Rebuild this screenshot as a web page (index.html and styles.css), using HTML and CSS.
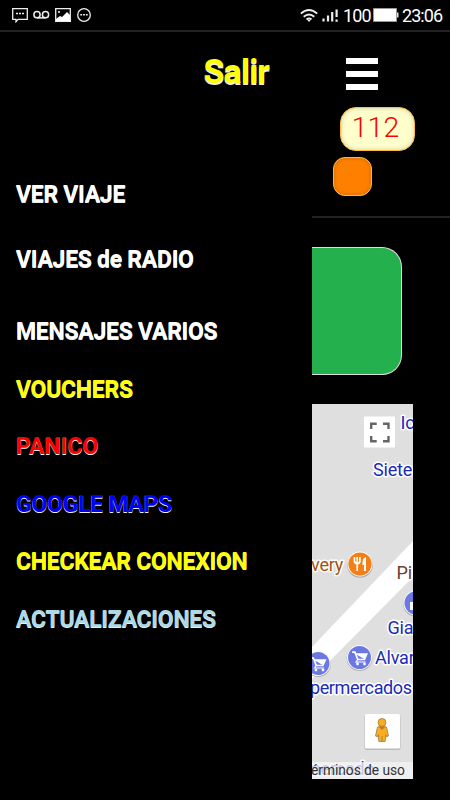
FILE: index.html
```html
<!DOCTYPE html>
<html lang="es">
<head>
<meta charset="utf-8">
<title>Menú</title>
<link rel="stylesheet" href="styles.css">
</head>
<body>
<header class="status">
  <svg class="notices" width="84" height="18" viewBox="0 0 84 18" fill="none" stroke="#eee" stroke-width="1.3">
    <path d="M.7 3.7h14.6v10.6H6l-2 2.4v-2.4H.7z"/><path d="M4 8.5h2m1 0h2m1 0h2" stroke-width="1.6"/>
    <circle cx="25" cy="9.7" r="3.1" stroke-width="1.5"/><circle cx="33.5" cy="9.7" r="3.1" stroke-width="1.5"/><path d="M25 12.9h8.5" stroke-width="1.5"/>
    <path d="M43.7 3.7h14.6v12.6H43.7z"/><path d="M44 14l4-3 2 1 5-5 3 3v6H44z" fill="#fff" stroke="none"/><circle cx="47" cy="7" r="1" fill="#fff" stroke="none"/>
    <circle cx="72" cy="10" r="6.3"/><path d="M68.3 9.8h1.8m1 0h1.8m1 0h1.8" stroke-width="1.6"/>
  </svg>
  <div class="system">
    <svg width="38" height="18" viewBox="0 0 38 18" fill="none" stroke="#eee" stroke-width="1.9">
      <path d="M.8 7.6Q9 .2 17.200 7.600M3.700 10.700q5.300-4.600 10.600 0M6.500 13.600q2.500-2 5 0"/><path d="M7.500 14h3L9 16z" fill="#fff" stroke="none"/>
      <path d="M23.500 15.500v-3M28 15.500v-6M32.200 15.500V6M36.600 3.500v7.500M36.600 13.500v2.300" stroke-width="2.200"/>
    </svg>
    <span class="percent">100</span>
    <svg width="26" height="14" viewBox="0 0 26 14"><path d="M.5.500h23v13H.500z" fill="#fff" stroke="#999"/><path d="M24 4.500h1.500v5H24z" fill="#ddd"/></svg>
    <span class="clock">23:06</span>
  </div>
</header>
<div class="app">
  <nav class="menu">
    <a class="exit">Salir</a>
    <a class="item first">VER VIAJE</a>
    <a class="item second">VIAJES de RADIO</a>
    <a class="item third">MENSAJES VARIOS</a>
    <a class="item yellow">VOUCHERS</a>
    <a class="item red">PANICO</a>
    <a class="item blue">GOOGLE MAPS</a>
    <a class="item yellow">CHECKEAR CONEXION</a>
    <a class="item pale">ACTUALIZACIONES</a>
  </nav>
  <main class="page">
    <div class="top">
      <div class="burger"><i></i><i></i><i></i></div>
      <div class="number">112</div>
      <div class="light"></div>
    </div>
    <div class="green"></div>
    <svg class="map" width="101" height="375" viewBox="0 0 101 375">
      <defs>
        <g id="cart"><circle r="12.800" cy=".7" fill="#aaa"/><circle r="12.500" fill="#fff"/><circle r="11.500" fill="#6b78e2"/><path d="M-7.500-5.500h3l3 7.500h7M-4-3.500h11.500L5 2h-7z" fill="#fff" stroke="#fff" stroke-width="1.300"/><path d="M-2 2.500l-1.500 2H6" stroke="#fff" stroke-width="1.200" fill="none"/><circle cx="-2" cy="6.500" r="1.400" fill="#fff"/><circle cx="5" cy="6.500" r="1.400" fill="#fff"/></g>
      </defs>
      <path d="M0 0h101v375H0z" fill="#dfdfdf"/>
      <path d="M0 243L101 137v36L0 275z" fill="#fff"/>
      <rect x="52" y="12.500" width="31" height="31" rx="1" fill="#fff"/>
      <path d="M59.200 25v-5.300h5.500M71 19.700h5.500V25M76.500 32v5.300H71M64.700 37.300h-5.500V32" fill="none" stroke="#666" stroke-width="2.400"/>
      <g class="place">
        <text x="88.500" y="25">Ic</text>
        <text x="61" y="71.500">Siete</text>
        <text class="food" x="-1" y="166.500">very</text>
        <text class="food dark" x="84.500" y="174.500">Pi</text>
        <text x="75.500" y="230">Gia</text>
        <text x="63" y="259.500">Alvar</text>
        <text class="long" x="-2" y="290">permercados</text>
      </g>
      <circle cx="48" cy="161" r="12.800" fill="#aaa"/><circle cx="48" cy="160" r="12.500" fill="#fff"/><circle cx="48" cy="160" r="11.600" fill="#f57f17"/>
      <path d="M42.500 153v4q0 2.500 2.700 2.500t2.700-2.500v-4M45.200 153v14" fill="none" stroke="#fff" stroke-width="1.700"/><path d="M54 153q-4 1-3.500 8h1.500v6h2z" fill="#fff"/>
      <circle cx="104" cy="200" r="12.800" fill="#aaa"/><circle cx="104" cy="199" r="12.500" fill="#fff"/><circle cx="104" cy="199" r="11.500" fill="#6b78e2"/><path d="M98 198h4v8h-4z" fill="#fff"/>
      <use href="#cart" x="47.500" y="253.500"/><use href="#cart" x="6" y="259.500"/>
      <rect x="52.500" y="311" width="36" height="35" rx="2" fill="#bbb"/><rect x="53" y="310" width="35" height="34.500" rx="1.500" fill="#fff"/>
      <g fill="#f9ae22" stroke="#8d7340" stroke-width=".7"><path d="M65.500 323q4.500-2 9 0l2 9-2 .8-.8-2-.5 6.700h-6.400l-.5-6.700-.8 2-2-.8z"/><circle cx="70" cy="318.500" r="4"/><path d="M70 332v5"/></g><path d="M67 323h6l-3 3z" fill="#e36b12"/>
      <g class="place"><text x="-7" y="371">mercado</text></g>
      <path d="M0 358h101v17H0z" fill="#f3f3f3" opacity=".78"/>
      <text class="terms" x="-1" y="371">érminos de uso</text>
    </svg>
  </main>
</div>
</body>
</html>
```
FILE: styles.css
```css
* { box-sizing: border-box; }
body { margin: 0; width: 450px; height: 800px; overflow: hidden; background: #000; color: #fff; font-family: Roboto, sans-serif; }
.status { height: 32px; display: flex; justify-content: space-between; padding: 5px 7px 0 12px; border-bottom: 2px solid #222; }
.system { height: 20px; display: flex; align-items: center; font-size: 18px; }
.percent { margin-left: 5px; margin-right: 2px; width: 28px; letter-spacing: -.9px; }
.clock { margin-left: 3px; width: 41px; letter-spacing: -.95px; }
.system svg { flex: none; }
.app { display: flex; height: 768px; }
.menu { width: 312px; display: flex; flex-direction: column; padding-left: 16px; }
.exit { height: 80px; margin: -1px 43px 1px 0; align-self: flex-end; color: #ff0; font-size: 34px; font-weight: 700; line-height: 80px; letter-spacing: -.8px; text-shadow: 0 1.5px 0 #eee; }
.item { height: 57.5px; line-height: 57.5px; font-size: 23px; font-weight: 700; letter-spacing: -.28px; white-space: nowrap; text-shadow: 0 1px 0 #eee; }
.first { margin-top: 54px; }
.second { margin-top: 7px; }
.third { margin-top: 15px; }
.yellow { color: #ff0; }
.red { color: #f00; letter-spacing: 0; }
.blue { color: #00f; }
.pale { color: #add8e6; }
.page { width: 138px; }
.top { height: 186px; padding-top: 26px; border-bottom: 2px solid #222; }
.burger { width: 32px; height: 32px; margin-left: 34px; display: flex; flex-direction: column; justify-content: space-between; }
.burger i { height: 6px; background: #fff; }
.number { width: 75px; height: 44px; margin: 17px 0 0 28px; border: 1px solid #fb3; border-radius: 16px; background: #ffc; box-shadow: inset 0 0 5px #cca; color: #f00; font-size: 28.5px; font-weight: 300; line-height: 39px; text-align: center; padding-right: 4px; }
.light { width: 39px; height: 39px; margin: 6px 0 0 20.5px; border: 1px solid #fb3; border-radius: 12px; background: #ff8000; box-shadow: inset 0 0 4px #c60; }
.green { width: 90px; height: 128px; margin-top: 29px; border: 1px solid #ddd; border-left: 0; border-radius: 0 20px 20px 0; background: #24b14d; }
.map { display: block; margin-top: 29px; }
.place text { font-size: 18px; fill: #1a2ab5; stroke: #fff; stroke-width: 3px; paint-order: stroke; stroke-linejoin: round; letter-spacing: -.2px; }
.place .long { letter-spacing: -.4px; }
.place .food { fill: #a1540f; }
.place .dark { fill: #6d4030; }
.terms { font-size: 13.8px; letter-spacing: -.05px; fill: #333; }
```
